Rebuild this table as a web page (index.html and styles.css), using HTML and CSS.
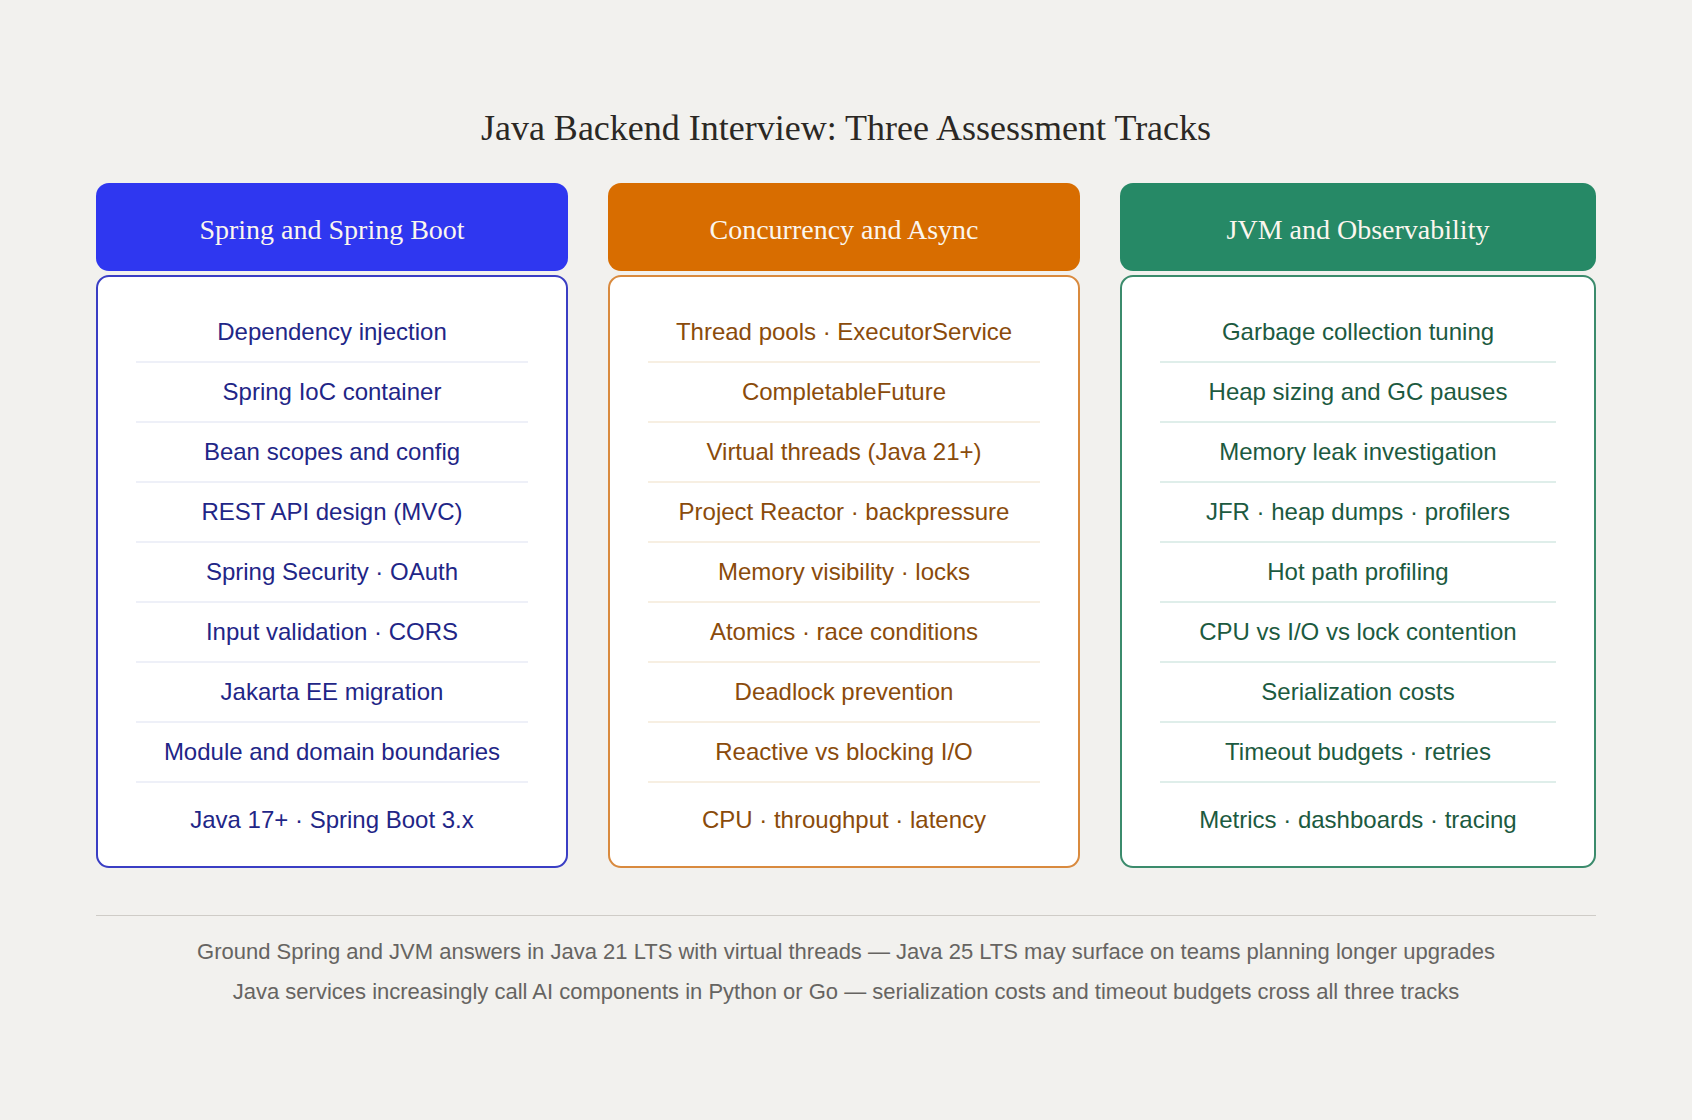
FILE: index.html
```html
<!DOCTYPE html>
<html lang="en">
<head>
<meta charset="utf-8">
<title>Java Backend Interview: Three Assessment Tracks</title>
<link rel="stylesheet" href="styles.css">
</head>
<body>
<main class="page">
  <h1 class="title">Java Backend Interview: Three Assessment Tracks</h1>
  <section class="tracks">
    <div class="track track-blue">
      <div class="track-head">Spring and Spring Boot</div>
      <ul class="track-body">
        <li>Dependency injection</li>
        <li>Spring IoC container</li>
        <li>Bean scopes and config</li>
        <li>REST API design (MVC)</li>
        <li>Spring Security · OAuth</li>
        <li>Input validation · CORS</li>
        <li>Jakarta EE migration</li>
        <li>Module and domain boundaries</li>
        <li>Java 17+ · Spring Boot 3.x</li>
      </ul>
    </div>
    <div class="track track-orange">
      <div class="track-head">Concurrency and Async</div>
      <ul class="track-body">
        <li>Thread pools · ExecutorService</li>
        <li>CompletableFuture</li>
        <li>Virtual threads (Java 21+)</li>
        <li>Project Reactor · backpressure</li>
        <li>Memory visibility · locks</li>
        <li>Atomics · race conditions</li>
        <li>Deadlock prevention</li>
        <li>Reactive vs blocking I/O</li>
        <li>CPU · throughput · latency</li>
      </ul>
    </div>
    <div class="track track-green">
      <div class="track-head">JVM and Observability</div>
      <ul class="track-body">
        <li>Garbage collection tuning</li>
        <li>Heap sizing and GC pauses</li>
        <li>Memory leak investigation</li>
        <li>JFR · heap dumps · profilers</li>
        <li>Hot path profiling</li>
        <li>CPU vs I/O vs lock contention</li>
        <li>Serialization costs</li>
        <li>Timeout budgets · retries</li>
        <li>Metrics · dashboards · tracing</li>
      </ul>
    </div>
  </section>
  <footer class="notes">
    <p>Ground Spring and JVM answers in Java 21 LTS with virtual threads — Java 25 LTS may surface on teams planning longer upgrades</p>
    <p>Java services increasingly call AI components in Python or Go — serialization costs and timeout budgets cross all three tracks</p>
  </footer>
</main>
</body>
</html>
```
FILE: styles.css
```css
* { box-sizing: border-box; }
html, body {
  margin: 0;
  padding: 0;
  background: #f2f1ee;
}
body {
  width: 1692px;
  height: 1120px;
  font-family: "Liberation Sans", Arial, sans-serif;
}
.page {
  width: 1500px;
  margin: 0 0 0 96px;
  padding-top: 104px;
}
.title {
  margin: 0;
  text-align: center;
  font-family: "Liberation Serif", "Times New Roman", serif;
  font-weight: normal;
  font-size: 36px;
  line-height: 48px;
  color: #2b2824;
}
.tracks {
  margin-top: 31px;
  display: grid;
  grid-template-columns: 472px 472px 476px;
  column-gap: 40px;
}
.track {
  display: flex;
  flex-direction: column;
  gap: 4px;
}
.track-head {
  height: 88px;
  padding-top: 6px;
  border-radius: 13px;
  display: flex;
  align-items: center;
  justify-content: center;
  font-family: "Liberation Serif", "Times New Roman", serif;
  font-size: 28px;
  color: #fbf6ee;
}
.track-body {
  list-style: none;
  margin: 0;
  padding: 26px 38px 16px;
  background: #ffffff;
  border: 2px solid;
  border-radius: 13px;
}
.track-body li {
  height: 60px;
  display: flex;
  align-items: center;
  justify-content: center;
  font-size: 24px;
  border-bottom: 2px solid;
  padding-bottom: 1px;
}
.track-body li:last-child {
  border-bottom: none;
  margin-top: 7px;
}
.track-blue .track-head { background: #2f37f0; }
.track-blue .track-body { border-color: #3a3ec4; }
.track-blue li { color: #1f2687; border-bottom-color: #eef0f8; }

.track-orange .track-head { background: #d86d00; }
.track-orange .track-body { border-color: #d98a3e; }
.track-orange li { color: #8a4b0b; border-bottom-color: #f7efe2; }

.track-green .track-head { background: #268966; }
.track-green .track-body { border-color: #3b8b6c; }
.track-green li { color: #1c5a40; border-bottom-color: #dfeeea; }

.notes {
  margin-top: 47px;
  border-top: 1px solid #cfccc7;
  padding-top: 16px;
  text-align: center;
  color: #666461;
  font-size: 22px;
}
.notes p {
  margin: 0;
  line-height: 40px;
}
```
